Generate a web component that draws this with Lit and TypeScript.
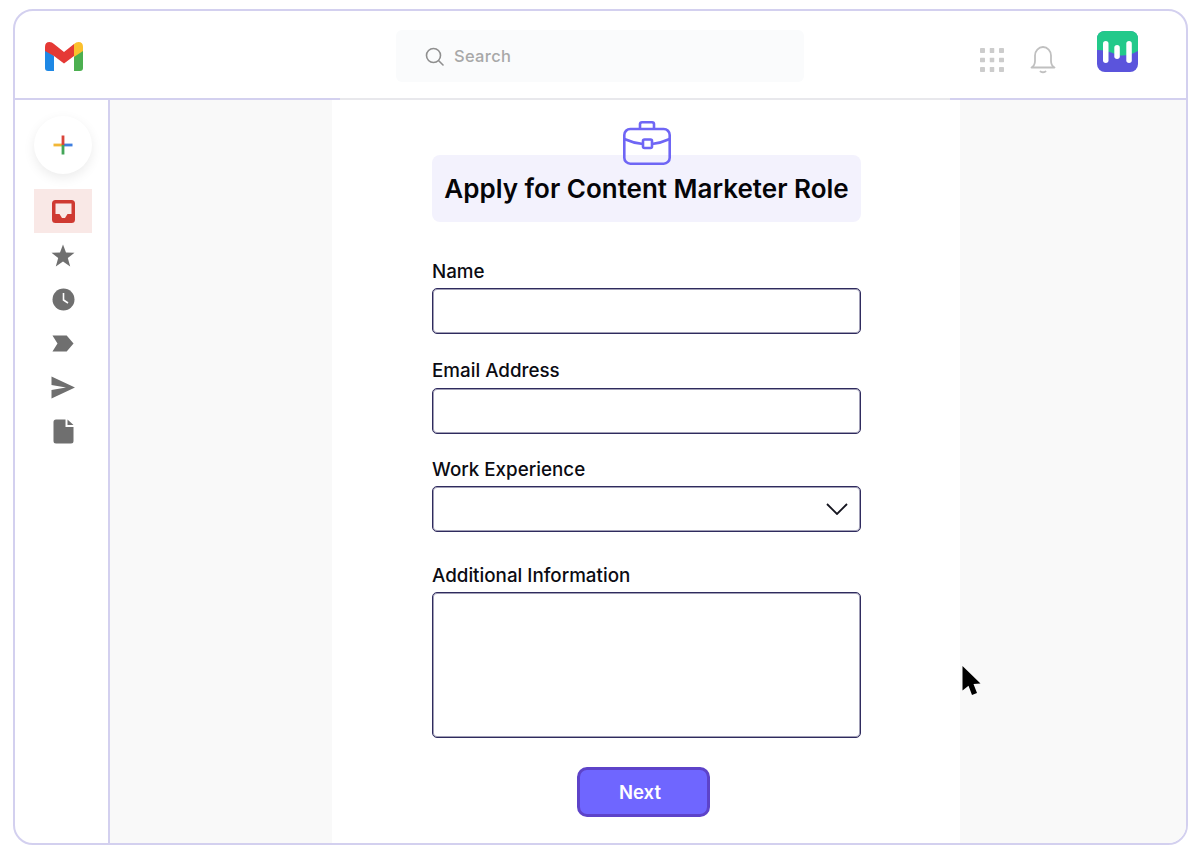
import { LitElement, html, css } from "lit";
import { customElement } from "lit/decorators.js";

@customElement("app-root")
export class AppRoot extends LitElement {
  static styles = css`
    :host { display: block; height: 853px; background: #fff; font-family: Inter, "Liberation Sans", sans-serif; color: #0b0b12; }
    * { box-sizing: border-box; }
    .page { height: 853px; padding: 9px 12px 8px 13px; }
    .frame { position: relative; height: 100%; border: 2px solid #d3d0ef; border-radius: 20px; overflow: hidden; display: grid; grid-template-rows: 89px 1fr; background: #fff; }
    header { display: flex; align-items: center; border-bottom: 2px solid #d3d0ef; position: relative; }
    .gmail { margin-left: 30px; width: 38px; height: 29px; display: block; margin-top: 4px; }
    .search { margin-left: 313px; width: 408px; height: 52px; background: #fafbfc; border-radius: 6px; display: flex; align-items: center; padding-left: 29px; gap: 10px; margin-top: 3px; }
    .search span { font-size: 16.500px; font-weight: 500; color: #a8a8a8; letter-spacing: 0.300px; }
    .grid { margin-left: 176px; margin-top: 10px; display: block; }
    .bell { margin-left: 26px; margin-top: 10px; display: block; }
    .logo { margin-left: 41px; margin-top: -6px; display: block; }
    .body { display: grid; grid-template-columns: 95px 1fr; min-height: 0; }
    nav { border-right: 2px solid #d3d0ef; display: flex; flex-direction: column; align-items: center; padding-top: 16px; padding-left: 3px; }
    .compose { width: 58px; height: 58px; border-radius: 50%; background: #fff; box-shadow: 0 4px 12px rgba(0,0,0,0.08); display: flex; align-items: center; justify-content: center; margin-bottom: 15px; }
    .nav-item { width: 58px; height: 44px; display: flex; align-items: center; justify-content: center; }
    .nav-item.active { background: #f9e8e6; }
    main { background: #f9f9f9; display: flex; justify-content: center; padding-right: 4px; min-height: 0; }
    .panel { position: relative; width: 628px; background: #fff; padding: 21px 99px 0 100px; display: flex; flex-direction: column; align-items: stretch; }
    .panel::before { content: ""; position: absolute; top: -2px; left: 8px; right: 10px; height: 2px; background: #e8e8ec; }
    .briefcase { align-self: center; margin: 0 0 -10px 1px; position: relative; z-index: 1; display: block; }
    .title { height: 67px; background: #f3f2fd; border-radius: 8px; display: flex; align-items: center; justify-content: center; font-size: 26px; font-weight: 600; margin-bottom: 38px; color: #050508; }
    label { display: block; font-size: 18.800px; line-height: 22px; font-weight: 500; padding-top: 1px; margin-bottom: 5px; color: #0b0b12; }
    label.raised { padding-top: 0; margin-bottom: 6px; }
    .box { display: flex; align-items: center; justify-content: flex-end; height: 46px; border: 1px solid #2f2b5e; box-shadow: inset 0 0 0 1px rgba(47,43,94,0.45); border-radius: 5px; background: #fff; padding-right: 12px; }
    .box.area { height: 146px; }
    .f1 { margin-bottom: 26px; }
    .f2 { margin-bottom: 24px; }
    .f3 { margin-bottom: 32px; }
    .f4 { margin-bottom: 29px; }
    .actions { display: flex; justify-content: center; padding-right: 7px; }
    button { width: 133px; height: 50px; border-radius: 10px; border: 3px solid #5d43c9; background: #6f66ff; color: #fff; font: 600 18.500px Inter, "Liberation Sans", sans-serif; padding: 0 6px 0 0; }
    .cursor { position: absolute; left: 947px; top: 655px; display: block; }
  `;

  render() {
    return html`
      <div class="page">
        <div class="frame">
          <header>
            <svg class="gmail" viewBox="0 0 38 29">
              <path d="M0 7 L0 26 Q0 29 3 29 L9 29 L9 14 Z" fill="#1e88e5"/>
              <path d="M29 14 L29 29 L35 29 Q38 29 38 26 L38 7 Z" fill="#4caf50"/>
              <path d="M29 4 L29 15 L38 9 L38 5 Q38 0 33.500 0 Q31 0 29 2 Z" fill="#fbc02d"/>
              <path d="M0 9 L0 5 Q0 0 4.500 0 Q7 0 9 2 L19 10 L29 2 L29 14 L19 21.500 L9 14 Z" fill="#e53935"/>
            </svg>
            <div class="search">
              <svg width="19" height="19" viewBox="0 0 19 19" fill="none" stroke="#8f8f8f" stroke-width="1.600"><circle cx="8.500" cy="8.500" r="7"/><path d="M14 14 L18 18" stroke-linecap="round"/></svg>
              <span>Search</span>
            </div>
            <svg class="grid" width="24" height="24" viewBox="0 0 24 24" fill="#cccccc">
              ${[0, 9.5, 19].flatMap((y) => [0, 9.5, 19].map((x) => html`<svg x=${x} y=${y} width="5" height="5"><rect width="5" height="5" rx="0.800"/></svg>`))}
            </svg>
            <svg class="bell" width="26" height="28" viewBox="0 0 26 28" fill="none" stroke="#c0c0c0" stroke-width="1.800" stroke-linecap="round" stroke-linejoin="round">
              <path d="M1.500 21.500 Q5 19.500 5 15 L5 9.500 C5 5 8.500 1 13 1 C17.500 1 21 5 21 9.500 L21 15 Q21 19.500 24.500 21.500 Z"/>
              <path d="M10.500 25.500 Q13 27 15.500 25.500"/>
            </svg>
            <svg class="logo" width="41" height="41" viewBox="0 0 41 41">
              <rect width="41" height="41" rx="8" fill="#5b54dc"/>
              <path d="M0 19 L0 8 Q0 0 8 0 L33 0 Q41 0 41 8 L41 20 Q30 26 20 24 Q10 19 0 19 Z" fill="#22c98a"/>
              <rect x="6" y="10" width="5.500" height="22" rx="2.750" fill="#fff"/>
              <rect x="17.300" y="14" width="5.500" height="14" rx="2.750" fill="#fff"/>
              <rect x="29.300" y="10" width="5.500" height="22" rx="2.750" fill="#fff"/>
            </svg>
          </header>
          <div class="body">
            <nav>
              <div class="compose">
                <svg width="20" height="20" viewBox="0 0 20 20">
                  <rect x="0.500" y="8.600" width="9.500" height="2.800" fill="#f2b736"/>
                  <rect x="10" y="8.600" width="9.500" height="2.800" fill="#3f7fe0"/>
                  <rect x="8.600" y="0.500" width="2.800" height="9.500" fill="#d9453b"/>
                  <rect x="8.600" y="10" width="2.800" height="9.500" fill="#43a558"/>
                </svg>
              </div>
              <div class="nav-item active">
                <svg width="23" height="23" viewBox="0 0 23 23">
                  <path fill-rule="evenodd" fill="#cf3a32" d="M3.500 0 H19.500 Q23 0 23 3.500 V19.500 Q23 23 19.500 23 H3.500 Q0 23 0 19.500 V3.500 Q0 0 3.500 0 Z M3.500 3.500 V14 H7.500 L10 18 H13 L15.500 14 H19.500 V3.500 Z"/>
                </svg>
              </div>
              <div class="nav-item">
                <svg width="24" height="23" viewBox="0 0 24 23"><path fill="#6f6f6f" d="M12 0.500 L15 8.500 L23.500 8.800 L16.800 14 L19.200 22.500 L12 17.600 L4.800 22.500 L7.200 14 L0.500 8.800 L9 8.500 Z"/></svg>
              </div>
              <div class="nav-item">
                <svg width="23" height="23" viewBox="0 0 23 23"><circle cx="11.500" cy="11.500" r="11" fill="#6f6f6f"/><path d="M11.500 5 V12 L16 15" fill="none" stroke="#fff" stroke-width="1.600"/></svg>
              </div>
              <div class="nav-item">
                <svg width="22" height="17" viewBox="0 0 24 18" preserveAspectRatio="none"><path fill="#6f6f6f" d="M0.500 0.500 H16 L23.500 9 L16 17.500 H0.500 L6 9 Z"/></svg>
              </div>
              <div class="nav-item">
                <svg width="24" height="23" viewBox="0 0 24 23"><path fill="#6f6f6f" d="M0.500 0.500 L24 11.500 L0.500 22.500 V14 L15 11.500 L0.500 9 Z"/></svg>
              </div>
              <div class="nav-item">
                <svg width="21" height="25" viewBox="0 0 21 25"><path fill="#6f6f6f" d="M3 0.500 H12.500 L12.500 8 H20.500 V22 Q20.500 24.500 18 24.500 H3 Q0.500 24.500 0.500 22 V3 Q0.500 0.500 3 0.500 Z M14.500 0.500 L20.500 6 H14.500 Z"/></svg>
              </div>
            </nav>
            <main>
              <section class="panel">
                <svg class="briefcase" width="48" height="44" viewBox="0 0 48 44" fill="none" stroke="#6f66f5" stroke-width="2.600" stroke-linejoin="round">
                  <path d="M17 8 V3 Q17 1.300 19 1.300 H29 Q31 1.300 31 3 V8"/>
                  <rect x="1.300" y="8" width="45.400" height="34.700" rx="6"/>
                  <path d="M1.300 18 Q10 22 20 23 M29 23 Q38 22 46.700 18"/>
                  <rect x="20" y="18.500" width="9" height="8.500" rx="1.500"/>
                </svg>
                <div class="title">Apply for Content Marketer Role</div>
                <div class="f1"><label>Name</label><div class="box"></div></div>
                <div class="f2"><label class="raised">Email Address</label><div class="box"></div></div>
                <div class="f3"><label>Work Experience</label>
                  <div class="box">
                    <svg width="22" height="12" viewBox="0 0 22 12" fill="none" stroke="#15151f" stroke-width="1.800"><path d="M1 1 L11 11 L21 1"/></svg>
                  </div>
                </div>
                <div class="f4"><label>Additional Information</label><div class="box area"></div></div>
                <div class="actions"><button>Next</button></div>
              </section>
            </main>
          </div>
          <svg class="cursor" width="20" height="31" viewBox="0 0 20 31"><path fill="#000" d="M0.500 0 L18.500 17.500 L11.500 18 L15 27 L10 29 L6.500 19.800 L0.500 24.500 Z"/></svg>
        </div>
      </div>
    `;
  }
}
